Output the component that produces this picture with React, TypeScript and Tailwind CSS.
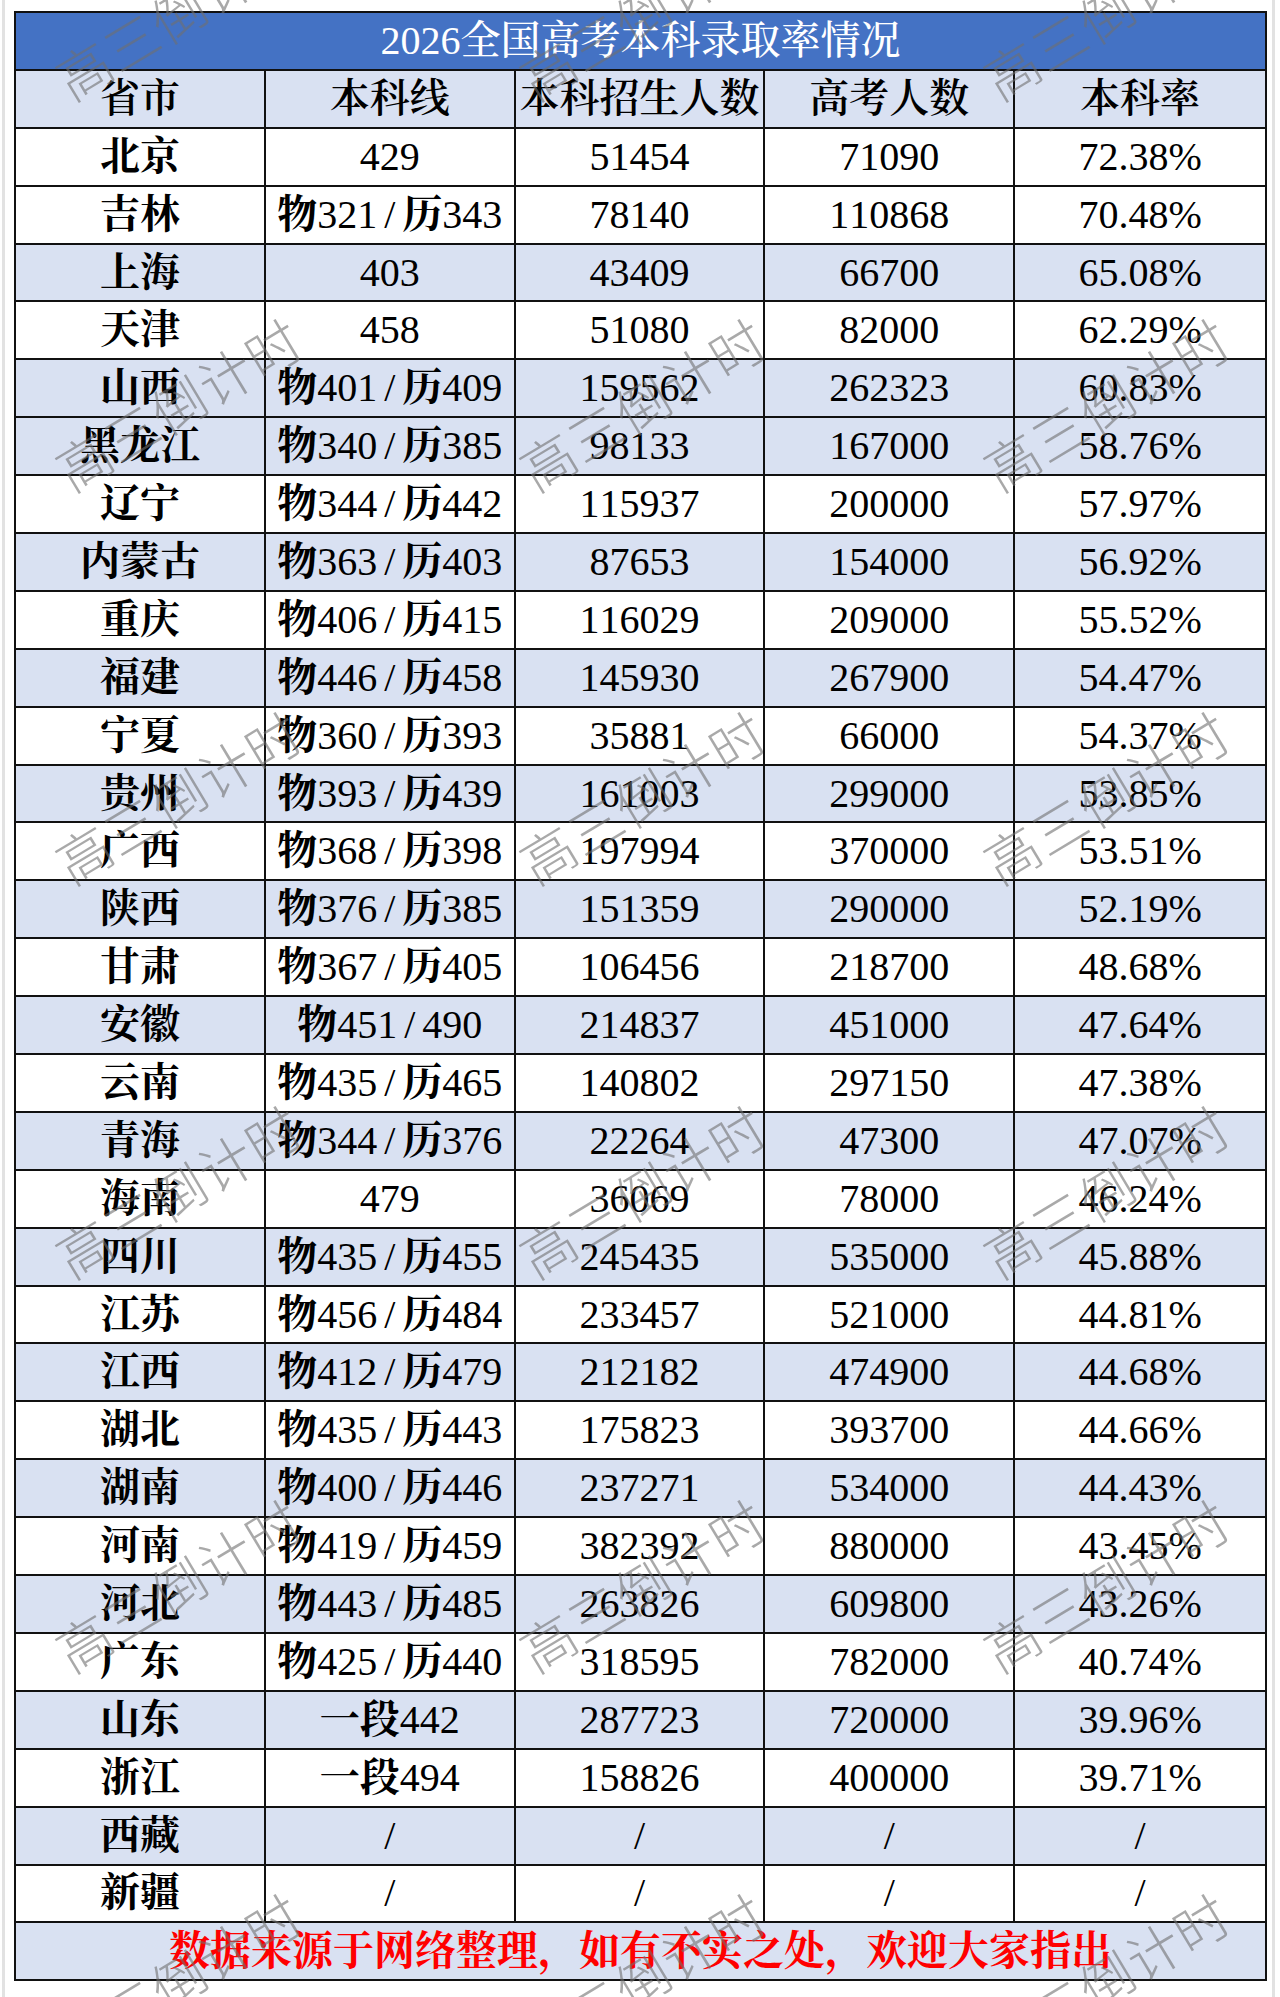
import React from "react";

const rows: [string, string, string, string, string][] = [
  ["北京", "429", "51454", "71090", "72.38%"],
  ["吉林", "物321/历343", "78140", "110868", "70.48%"],
  ["上海", "403", "43409", "66700", "65.08%"],
  ["天津", "458", "51080", "82000", "62.29%"],
  ["山西", "物401/历409", "159562", "262323", "60.83%"],
  ["黑龙江", "物340/历385", "98133", "167000", "58.76%"],
  ["辽宁", "物344/历442", "115937", "200000", "57.97%"],
  ["内蒙古", "物363/历403", "87653", "154000", "56.92%"],
  ["重庆", "物406/历415", "116029", "209000", "55.52%"],
  ["福建", "物446/历458", "145930", "267900", "54.47%"],
  ["宁夏", "物360/历393", "35881", "66000", "54.37%"],
  ["贵州", "物393/历439", "161003", "299000", "53.85%"],
  ["广西", "物368/历398", "197994", "370000", "53.51%"],
  ["陕西", "物376/历385", "151359", "290000", "52.19%"],
  ["甘肃", "物367/历405", "106456", "218700", "48.68%"],
  ["安徽", "物451/490", "214837", "451000", "47.64%"],
  ["云南", "物435/历465", "140802", "297150", "47.38%"],
  ["青海", "物344/历376", "22264", "47300", "47.07%"],
  ["海南", "479", "36069", "78000", "46.24%"],
  ["四川", "物435/历455", "245435", "535000", "45.88%"],
  ["江苏", "物456/历484", "233457", "521000", "44.81%"],
  ["江西", "物412/历479", "212182", "474900", "44.68%"],
  ["湖北", "物435/历443", "175823", "393700", "44.66%"],
  ["湖南", "物400/历446", "237271", "534000", "44.43%"],
  ["河南", "物419/历459", "382392", "880000", "43.45%"],
  ["河北", "物443/历485", "263826", "609800", "43.26%"],
  ["广东", "物425/历440", "318595", "782000", "40.74%"],
  ["山东", "一段442", "287723", "720000", "39.96%"],
  ["浙江", "一段494", "158826", "400000", "39.71%"],
  ["西藏", "/", "/", "/", "/"],
  ["新疆", "/", "/", "/", "/"],
];

const shaded = new Set([2, 4, 5, 7, 9, 11, 13, 15, 17, 19, 21, 23, 25, 27, 29]);

const headers = ["省市", "本科线", "本科招生人数", "高考人数", "本科率"];

const watermarkPos = [
  "left-[178px] top-[12px]",
  "left-[642px] top-[12px]",
  "left-[1106px] top-[12px]",
  "left-[178px] top-[403px]",
  "left-[642px] top-[403px]",
  "left-[1106px] top-[403px]",
  "left-[178px] top-[796px]",
  "left-[642px] top-[796px]",
  "left-[1106px] top-[796px]",
  "left-[178px] top-[1190px]",
  "left-[642px] top-[1190px]",
  "left-[1106px] top-[1190px]",
  "left-[178px] top-[1584px]",
  "left-[642px] top-[1584px]",
  "left-[1106px] top-[1584px]",
  "left-[178px] top-[1978px]",
  "left-[642px] top-[1978px]",
  "left-[1106px] top-[1978px]",
];

function CellText({ text }: { text: string }) {
  const parts = Array.from(text);
  const mixed = parts.length > 1;
  return (
    <>
      {parts.map((ch, i) =>
        /[\u4e00-\u9fff]/.test(ch) ? (
          <span key={i} className="font-bold">
            {ch}
          </span>
        ) : ch === "/" && mixed ? (
          <span key={i} className="mx-[7px]">
            {ch}
          </span>
        ) : (
          <span key={i}>{ch}</span>
        )
      )}
    </>
  );
}

export default function App() {
  return (
    <div className="relative w-[1280px] h-[1997px] bg-white overflow-hidden font-['Liberation_Serif','Noto_Serif_CJK_SC','Noto_Sans_CJK_SC',serif] text-black">
      <div className="flex h-full pl-[2px]">
        <div className="w-[1273px] h-full border-x-[3px] border-[#e2e2e2] pt-[11px] pl-[9px]">
          <div className="w-[1253px] border-2 border-[#111]">
            {/* title */}
            <div className="h-[57.9px] bg-[#4472c4] border-b-2 border-[#111] flex items-center justify-center text-white text-[40px] leading-none">
              <span>2026</span>
              <span className="font-medium">全国高考本科录取率情况</span>
            </div>
            {/* header */}
            <div className="h-[57.9px] bg-[#d9e1f2] border-b-2 border-[#111] grid grid-cols-5">
              {headers.map((h, i) => (
                <div
                  key={h}
                  className={
                    "flex items-center justify-center text-[40px] leading-none font-semibold " +
                    (i < 4 ? "border-r-2 border-[#111]" : "")
                  }
                >
                  {h}
                </div>
              ))}
            </div>
            {rows.map((r, ri) => (
              <div
                key={r[0]}
                className={
                  "h-[57.9px] border-b-2 border-[#111] grid grid-cols-5 " +
                  (shaded.has(ri) ? "bg-[#d9e1f2]" : "bg-white")
                }
              >
                {r.map((c, ci) => (
                  <div
                    key={ci}
                    className={
                      "flex items-center justify-center text-[40px] leading-none whitespace-nowrap " +
                      (ci < 4 ? "border-r-2 border-[#111]" : "")
                    }
                  >
                    <CellText text={c} />
                  </div>
                ))}
              </div>
            ))}
            {/* footer */}
            <div className="h-[55.9px] bg-[#d9e1f2] flex items-center justify-center text-[41px] leading-none font-bold text-[#ff0000]">
              数据来源于网络整理，如有不实之处，欢迎大家指出
            </div>
          </div>
        </div>
      </div>
      {/* watermarks */}
      {watermarkPos.map((p, i) => (
        <div
          key={i}
          className={
            "absolute pointer-events-none -translate-x-1/2 -translate-y-1/2 -rotate-[31deg] whitespace-nowrap font-['Noto_Sans_CJK_SC',sans-serif] font-light text-[54px] leading-none tracking-[1px] text-[#707070]/60 " +
            p
          }
        >
          高三倒计时
        </div>
      ))}
    </div>
  );
}
